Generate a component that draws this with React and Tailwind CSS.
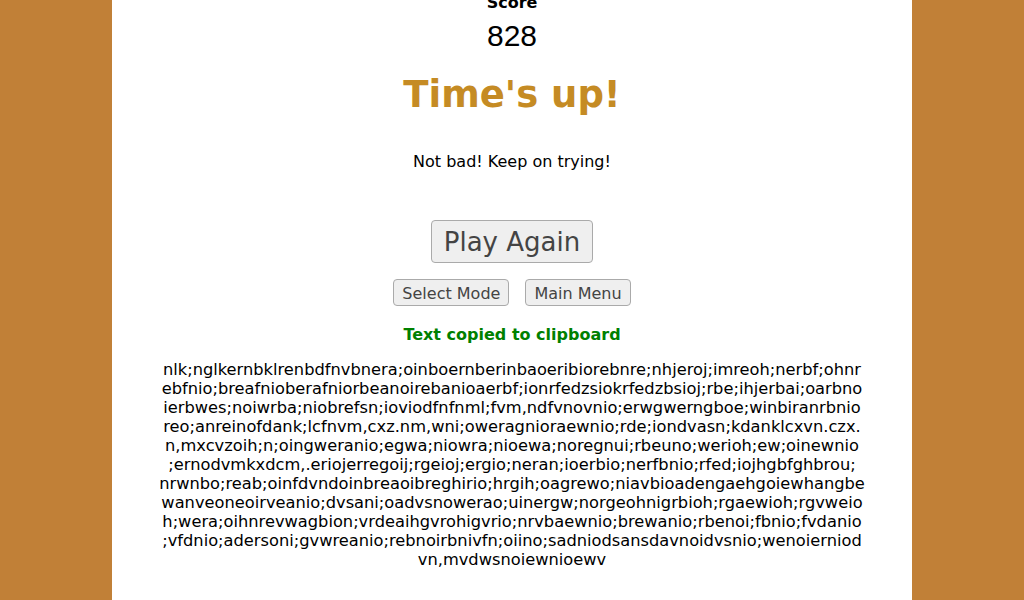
const copiedLines = [
  'nlk;nglkernbklrenbdfnvbnera;oinboernberinbaoeribiorebnre;nhjeroj;imreoh;nerbf;ohnr',
  'ebfnio;breafnioberafniorbeanoirebanioaerbf;ionrfedzsiokrfedzbsioj;rbe;ihjerbai;oarbno',
  'ierbwes;noiwrba;niobrefsn;ioviodfnfnml;fvm,ndfvnovnio;erwgwerngboe;winbiranrbnio',
  'reo;anreinofdank;lcfnvm,cxz.nm,wni;oweragnioraewnio;rde;iondvasn;kdanklcxvn.czx.',
  'n,mxcvzoih;n;oingweranio;egwa;niowra;nioewa;noregnui;rbeuno;werioh;ew;oinewnio',
  ';ernodvmkxdcm,.eriojerregoij;rgeioj;ergio;neran;ioerbio;nerfbnio;rfed;iojhgbfghbrou;',
  'nrwnbo;reab;oinfdvndoinbreaoibreghirio;hrgih;oagrewo;niavbioadengaehgoiewhangbe',
  'wanveoneoirveanio;dvsani;oadvsnowerao;uinergw;norgeohnigrbioh;rgaewioh;rgvweio',
  'h;wera;oihnrevwagbion;vrdeaihgvrohigvrio;nrvbaewnio;brewanio;rbenoi;fbnio;fvdanio',
  ';vfdnio;adersoni;gvwreanio;rebnoirbnivfn;oiino;sadniodsansdavnoidvsnio;wenoierniod',
  'vn,mvdwsnoiewnioewv',
]

export default function App() {
  return (
    <div className="h-[600px] overflow-hidden bg-[#c18037] font-['DejaVu_Sans',sans-serif] text-black">
      <div className="mx-auto w-[800px] h-full bg-white flex flex-col items-center">
        {/* Score */}
        <div className="-mt-[7px] text-base font-bold leading-[19px]">Score</div>
        <div className="mt-[7px] font-['Liberation_Sans',Arial,sans-serif] text-[30px] leading-[34px]">828</div>

        <h1 className="mt-[18px] text-[37px] leading-[47px] font-bold text-[#c58b24]">Time's up!</h1>

        <p className="mt-[34px] text-base leading-[19px]">Not bad! Keep on trying!</p>

        <button className="mt-[49px] px-[12px] pt-[6px] pb-[4px] text-[26px] leading-[31px] text-[#444] bg-[#efefef] border border-[#aaa] rounded-[4px]">
          Play Again
        </button>

        <div className="mt-[16px] flex gap-4">
          <button className="px-[8px] pt-[4px] pb-[2px] text-base leading-[19px] text-[#444] bg-[#efefef] border border-[#aaa] rounded-[4px]">
            Select Mode
          </button>
          <button className="px-[8px] pt-[4px] pb-[2px] text-base leading-[19px] text-[#444] bg-[#efefef] border border-[#aaa] rounded-[4px]">
            Main Menu
          </button>
        </div>

        <div className="mt-[19px] text-base leading-[19px] font-bold text-[#008000]">Text copied to clipboard</div>

        <div className="mt-[16px] text-center text-[16.25px] leading-[19px]">
          {copiedLines.map((line, i) => (
            <div key={i} className="whitespace-nowrap">{line}</div>
          ))}
        </div>
      </div>
    </div>
  )
}
